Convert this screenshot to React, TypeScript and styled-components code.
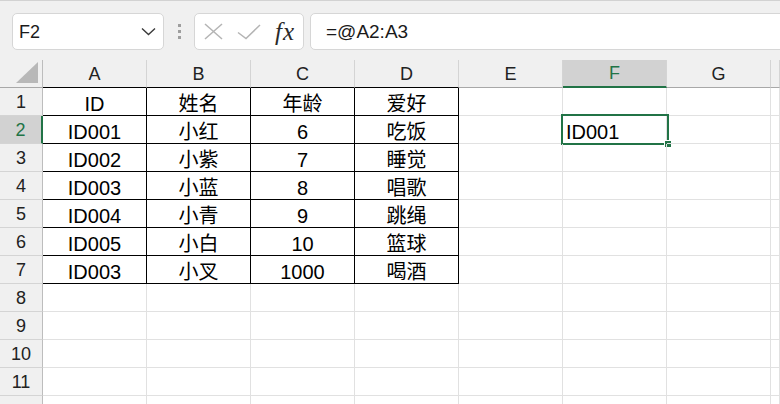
import React from 'react';
import styled, { createGlobalStyle } from 'styled-components';

const GREEN = '#217346';
const GRID = '#e1e1e1';

const GlobalStyle = createGlobalStyle`
  html, body {
    margin: 0;
    padding: 0;
    background: #ffffff;
  }
  body {
    font-family: "Liberation Sans", "Noto Sans CJK SC", sans-serif;
    color: #000;
  }
`;

// the last column and the last row are only a few pixels wide on screen, so no label
const columns = ['A', 'B', 'C', 'D', 'E', 'F', 'G', ''];

const data: string[][] = [
  ['ID', '姓名', '年龄', '爱好'],
  ['ID001', '小红', '6', '吃饭'],
  ['ID002', '小紫', '7', '睡觉'],
  ['ID003', '小蓝', '8', '唱歌'],
  ['ID004', '小青', '9', '跳绳'],
  ['ID005', '小白', '10', '篮球'],
  ['ID003', '小叉', '1000', '喝酒'],
];

const ROW_COUNT = 12;
const LABELLED_ROWS = 11;
const TABLE_COLS = 4;
const ACTIVE_ROW = 2;
const ACTIVE_COL = 5;

export default function App() {
  const rows = Array.from({ length: ROW_COUNT }, (_, i) => i + 1);

  return (
    <Styled.Page>
      <GlobalStyle />
      <Styled.FormulaBar>
        <Styled.NameBox>
          <Styled.NameText>F2</Styled.NameText>
          <svg width="15" height="9" viewBox="0 0 15 9">
            <polyline points="1,1.5 7.5,7.5 14,1.5" fill="none" stroke="#3a3a3a" strokeWidth="1.4" />
          </svg>
        </Styled.NameBox>
        <Styled.Dots>
          <span />
          <span />
          <span />
        </Styled.Dots>
        <Styled.FxBox>
          <svg width="19" height="17" viewBox="0 0 19 17">
            <line x1="1" y1="1" x2="18" y2="16" stroke="#b4b4b4" strokeWidth="1.5" />
            <line x1="18" y1="1" x2="1" y2="16" stroke="#b4b4b4" strokeWidth="1.5" />
          </svg>
          <svg width="24" height="16" viewBox="0 0 24 16">
            <polyline points="1,8.5 9,14.5 23,1" fill="none" stroke="#b4b4b4" strokeWidth="1.5" />
          </svg>
          <Styled.Fx>fx</Styled.Fx>
        </Styled.FxBox>
        <Styled.FormulaInput>=@A2:A3</Styled.FormulaInput>
      </Styled.FormulaBar>

      <Styled.Sheet>
        <Styled.Corner>
          <svg width="22" height="21" viewBox="0 0 22 21">
            <polygon points="22,0 22,21 0,21" fill="#b8b8b8" />
          </svg>
        </Styled.Corner>
        {columns.map((c, ci) => (
          <Styled.ColHeader key={ci} $active={ci === ACTIVE_COL} $table={ci < TABLE_COLS}>
            {c}
          </Styled.ColHeader>
        ))}

        {rows.map((r) => (
          <React.Fragment key={r}>
            <Styled.RowHeader $active={r === ACTIVE_ROW}>{r <= LABELLED_ROWS ? r : ''}</Styled.RowHeader>
            {columns.map((_, ci) => {
              const inTable = r <= data.length && ci < TABLE_COLS;
              const value = inTable ? data[r - 1][ci] : '';
              const selected = r === ACTIVE_ROW && ci === ACTIVE_COL;
              return (
                <Styled.Cell key={ci} $table={inTable} $left={selected}>
                  {selected ? 'ID001' : value}
                  {selected && (
                    <Styled.Selection>
                      <Styled.FillHandle />
                    </Styled.Selection>
                  )}
                </Styled.Cell>
              );
            })}
          </React.Fragment>
        ))}
      </Styled.Sheet>
    </Styled.Page>
  );
}

const Styled = {
  Page: styled.div`
    width: 780px;
    height: 404px;
    overflow: hidden;
    background: #ffffff;
  `,
  FormulaBar: styled.div`
    display: flex;
    align-items: flex-start;
    box-sizing: border-box;
    height: 60px;
    padding: 12px 0 0 12px;
    border-top: 1px solid #d2d2d2;
    background: #f0f0f0;
  `,
  NameBox: styled.div`
    display: flex;
    align-items: center;
    justify-content: space-between;
    box-sizing: border-box;
    width: 152px;
    height: 37px;
    padding: 0 7px 0 6px;
    background: #ffffff;
    border: 1px solid #d6d6d6;
    border-radius: 5px;
  `,
  NameText: styled.span`
    font-size: 18px;
    line-height: 20px;
    color: #1a1a1a;
  `,
  Dots: styled.div`
    display: flex;
    flex-direction: column;
    align-items: center;
    justify-content: center;
    gap: 3px;
    width: 30px;
    height: 37px;
    span {
      width: 3px;
      height: 3px;
      background: #9e9e9e;
    }
  `,
  FxBox: styled.div`
    display: flex;
    align-items: center;
    box-sizing: border-box;
    width: 110px;
    height: 37px;
    padding: 0 0 0 9px;
    gap: 14px;
    background: #ffffff;
    border: 1px solid #d6d6d6;
    border-radius: 5px;
  `,
  Fx: styled.span`
    font-family: "Liberation Serif", serif;
    font-style: italic;
    font-size: 25px;
    line-height: 24px;
    color: #2a2a2a;
    letter-spacing: 1px;
  `,
  FormulaInput: styled.div`
    flex: 1;
    display: flex;
    align-items: center;
    box-sizing: border-box;
    height: 37px;
    margin: 0 -10px 0 6px;
    padding-left: 15px;
    background: #ffffff;
    border: 1px solid #d6d6d6;
    border-radius: 5px;
    font-size: 19px;
    color: #1a1a1a;
  `,
  Sheet: styled.div`
    display: grid;
    grid-template-columns: 43px repeat(7, 104px) 1fr;
    grid-auto-rows: 28px;
  `,
  Corner: styled.div`
    display: flex;
    align-items: flex-end;
    justify-content: flex-end;
    box-sizing: border-box;
    padding: 0 4px 4px 0;
    background: #f0f0f0;
    border-right: 1px solid #bdbdbd;
    border-bottom: 1px solid #a8a8a8;
  `,
  ColHeader: styled.div<{ $active?: boolean; $table?: boolean }>`
    display: flex;
    align-items: flex-end;
    justify-content: center;
    box-sizing: border-box;
    padding-bottom: 3px;
    font-size: 18px;
    line-height: 20px;
    color: ${(p) => (p.$active ? GREEN : '#222222')};
    background: ${(p) => (p.$active ? '#d2d2d2' : '#f0f0f0')};
    border-right: 1px solid #d4d4d4;
    border-bottom: ${(p) =>
      p.$active ? `2px solid ${GREEN}` : p.$table ? '1px solid #000000' : '1px solid #a8a8a8'};
  `,
  RowHeader: styled.div<{ $active?: boolean }>`
    display: flex;
    align-items: flex-end;
    justify-content: center;
    box-sizing: border-box;
    padding-bottom: 3px;
    font-size: 18px;
    line-height: 20px;
    color: ${(p) => (p.$active ? GREEN : '#222222')};
    background: ${(p) => (p.$active ? '#d2d2d2' : '#f0f0f0')};
    border-bottom: 1px solid #d4d4d4;
    border-right: ${(p) => (p.$active ? `2px solid ${GREEN}` : '1px solid #bdbdbd')};
  `,
  Cell: styled.div<{ $table?: boolean; $left?: boolean }>`
    position: relative;
    display: flex;
    align-items: flex-end;
    justify-content: ${(p) => (p.$left ? 'flex-start' : 'center')};
    box-sizing: border-box;
    padding-left: ${(p) => (p.$left ? '3px' : '0')};
    font-size: 20px;
    line-height: 22px;
    white-space: nowrap;
    color: #000000;
    border-right: 1px solid ${(p) => (p.$table ? '#000000' : GRID)};
    border-bottom: 1px solid ${(p) => (p.$table ? '#000000' : GRID)};
  `,
  Selection: styled.div`
    position: absolute;
    top: -2px;
    left: -2px;
    right: -3px;
    bottom: -2px;
    border: 2px solid ${GREEN};
    pointer-events: none;
  `,
  FillHandle: styled.div`
    position: absolute;
    right: -5px;
    bottom: -5px;
    width: 6px;
    height: 6px;
    background: ${GREEN};
    border: 1px solid #ffffff;
  `,
};
